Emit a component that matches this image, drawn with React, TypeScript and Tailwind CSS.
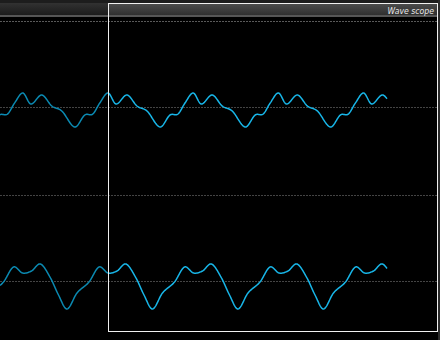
type Key = [number, number];

// one period of each trace: [phase px, y px]
const TRACE_A: Key[] = [
  [0, 93], [8, 104], [19, 95], [29, 106], [39, 111],
  [52, 127], [62, 115], [70, 114], [77, 103],
];
const TRACE_B: Key[] = [
  [0, 309], [10, 293], [22, 282], [32, 267], [41, 273],
  [50, 271], [59, 264], [69, 278], [77, 295],
];

function sample(keys: Key[], period: number, offset: number, x: number) {
  const n = keys.length;
  const ext: Key[] = [
    [keys[n - 1][0] - period, keys[n - 1][1]],
    ...keys,
    [keys[0][0] + period, keys[0][1]],
    [keys[1][0] + period, keys[1][1]],
  ];
  const ph = (((x - offset) % period) + period) % period;
  let i = 1;
  for (let k = 1; k <= n; k++) if (ext[k][0] <= ph) i = k;
  const [p0, y0] = ext[i];
  const [p1, y1] = ext[i + 1];
  const m0 = (y1 - ext[i - 1][1]) / (p1 - ext[i - 1][0]);
  const m1 = (ext[i + 2][1] - y0) / (ext[i + 2][0] - p0);
  const h = p1 - p0;
  const t = (ph - p0) / h;
  const t2 = t * t;
  const t3 = t2 * t;
  return (
    (2 * t3 - 3 * t2 + 1) * y0 +
    (t3 - 2 * t2 + t) * h * m0 +
    (-2 * t3 + 3 * t2) * y1 +
    (t3 - t2) * h * m1
  );
}

function points(keys: Key[], period: number, offset: number, from: number, to: number) {
  const out: string[] = [];
  for (let x = from; x <= to; x += 0.5) {
    out.push(`${x},${sample(keys, period, offset, x).toFixed(2)}`);
  }
  return out.join(" ");
}

const SPLIT = 108.5;
const END = 387;

function Trace({ keys, period, offset }: { keys: Key[]; period: number; offset: number }) {
  return (
    <>
      <polyline
        points={points(keys, period, offset, 0, SPLIT)}
        fill="none"
        stroke="#0b8ab2"
        strokeWidth={1.5}
        strokeLinejoin="round"
      />
      <polyline
        points={points(keys, period, offset, SPLIT, END)}
        fill="none"
        stroke="#18b6e8"
        strokeWidth={1.5}
        strokeLinejoin="round"
      />
    </>
  );
}

export default function App() {
  const grid = [21.5, 107.5, 195.5, 281.5];

  return (
    <div className="relative flex h-[340px] w-[440px] overflow-hidden bg-black">
      <div className="flex flex-1 flex-col">
        <div className="h-[3px] bg-[#1d1d1d]" />
        <div className="flex h-[14px] border-b-2 border-[#565656]">
          <div className="w-[108px] bg-linear-to-b from-[#323232] to-[#1c1c1c]" />
          <div className="flex flex-1 items-start justify-end bg-linear-to-b from-[#4e4e4e] to-[#2f2f2f] pt-[4px] pr-[4px]">
            <span className="font-['DejaVu_Sans_Condensed','DejaVu_Sans',sans-serif] text-[8.6px] italic leading-none text-[#e8e8e8]">
              Wave scope
            </span>
          </div>
        </div>

        <svg width={438} height={323} viewBox="0 17 438 323" className="block">
          {grid.map((y) => (
            <line
              key={y}
              x1={0}
              x2={438}
              y1={y}
              y2={y}
              stroke={y === 21.5 ? "#595959" : "#444"}
              strokeWidth={1}
              strokeDasharray="2 1"
            />
          ))}
          <Trace keys={TRACE_A} period={85.2} offset={108} />
          <Trace keys={TRACE_B} period={85.5} offset={67} />
        </svg>
      </div>
      <div className="w-[2px] bg-[#2a2a2a]" />

      {/* selection window */}
      <div className="pointer-events-none absolute left-[108px] top-[3px] h-[329px] w-[330px] border border-[#f0f0f0]" />
    </div>
  );
}
